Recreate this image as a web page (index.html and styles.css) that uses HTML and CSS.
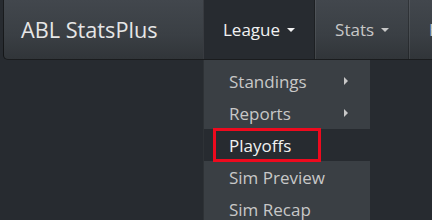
FILE: index.html
```html
<!DOCTYPE html>
<html>
<head>
<meta charset="utf-8">
<link rel="stylesheet" href="styles.css">
</head>
<body>
<div class="page">
<nav class="navbar">
  <div class="brand">ABL StatsPlus</div>
  <ul class="nav">
    <li class="nav-item open">
      <span class="nav-link">League <span class="caret"></span></span>
      <ul class="dropdown">
        <li class="dd-item"><span>Standings</span><span class="sub-caret"></span></li>
        <li class="dd-item"><span>Reports</span><span class="sub-caret"></span></li>
        <li class="dd-item active"><span>Playoffs</span></li>
        <li class="dd-item"><span>Sim Preview</span></li>
        <li class="dd-item"><span>Sim Recap</span></li>
        <li class="highlight-box"></li>
      </ul>
    </li>
    <li class="nav-item">
      <span class="nav-link">Stats <span class="caret"></span></span>
    </li>
    <li class="nav-item">
      <span class="nav-link">History <span class="caret"></span></span>
    </li>
  </ul>
</nav>
</div>
</body>
</html>
```
FILE: styles.css
```css
html, body {
  margin: 0;
  padding: 0;
  background: #272b30;
}
body {
  font-family: "Open Sans", "Noto Sans", sans-serif;
  color: #c8c8c8;
}
.page {
  width: 432px;
  height: 220px;
  box-sizing: border-box;
  padding-left: 3px;
  overflow: hidden;
}
.navbar {
  display: flex;
  height: 59px;
  border-left: 1px solid rgba(0, 0, 0, 0.6);
  border-bottom: 1px solid rgba(0, 0, 0, 0.6);
  border-bottom-left-radius: 5px;
  background-image: linear-gradient(#42474d, #3a3f44 60%, #313539);
  white-space: nowrap;
}
.brand {
  flex-shrink: 0;
  box-sizing: border-box;
  width: 199px;
  padding-left: 17px;
  font-size: 21.7px;
  line-height: 59px;
  color: #e6e6e6;
}
.nav {
  display: flex;
  flex-shrink: 0;
  margin: 0;
  padding: 0;
  list-style: none;
}
.nav-item {
  position: relative;
  flex-shrink: 0;
  border-left: 1px solid rgba(255, 255, 255, 0.08);
  border-right: 1px solid rgba(0, 0, 0, 0.25);
}
.nav-item.open {
  background: #272b30;
  z-index: 2;
}
.nav-link {
  display: flex;
  align-items: center;
  gap: 7px;
  padding: 0 19px;
  font-size: 17px;
  line-height: 59px;
  color: #c8c8c8;
}
.open .nav-link {
  color: #f2f2f2;
}
.caret {
  width: 0;
  height: 0;
  border-top: 4px solid currentColor;
  border-left: 4px solid transparent;
  border-right: 4px solid transparent;
  margin-top: 1px;
}
.dropdown {
  position: absolute;
  top: 60px;
  left: -1px;
  width: 167px;
  box-sizing: border-box;
  margin: 0;
  padding: 5px 0;
  list-style: none;
  background: #3a3f44;
  border-left: 1px solid rgba(0, 0, 0, 0.2);
}
.dd-item {
  display: flex;
  justify-content: space-between;
  align-items: center;
  height: 32px;
  padding: 0 22px 0 25px;
  font-size: 17px;
  color: #c8c8c8;
}
.dd-item.active {
  background: #272b30;
  color: #f2f2f2;
}
.sub-caret {
  width: 0;
  height: 0;
  border-left: 4px solid #c8c8c8;
  border-top: 4px solid transparent;
  border-bottom: 4px solid transparent;
}
.highlight-box {
  position: absolute;
  left: 9px;
  top: 68px;
  width: 108px;
  height: 34px;
  box-sizing: border-box;
  border: 3px solid #ee0a1e;
}
```
